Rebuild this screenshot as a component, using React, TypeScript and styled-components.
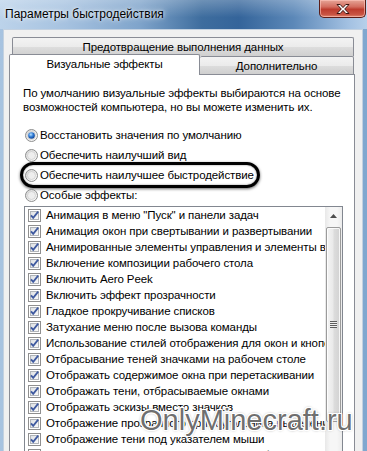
import styled, { createGlobalStyle } from "styled-components";

const GlobalStyle = createGlobalStyle`
  html, body { margin: 0; padding: 0; }
  body {
    font-family: "Liberation Sans", Arial, sans-serif;
    font-size: 11.5px;
    letter-spacing: -0.1px;
    color: #000;
  }
`;

const Window = styled.div`
  position: relative;
  width: 367px;
  height: 451px;
  overflow: hidden;
  display: flex;
  flex-direction: column;
  background: linear-gradient(90deg, #a7c3e0 0%, #94b4d6 50%, #80a7cf 100%);
`;

const TitleBar = styled.div`
  height: 29px;
  flex: none;
  display: flex;
  justify-content: space-between;
  align-items: flex-start;
  background:
    linear-gradient(180deg, rgba(255, 255, 255, 0.25) 0%, rgba(255, 255, 255, 0) 60%),
    linear-gradient(90deg, #bcd3ea 0%, #a6c2e0 18%, #7fa4cb 38%, #3e6d9e 55%, #34649a 65%, #5c88b8 80%, #a3c1e2 95%, #b7d0ea 100%);
`;

const Title = styled.div`
  padding: 7px 0 0 5px;
  line-height: 15px;
  font-size: 12px;
  letter-spacing: 0;
  color: #000;
  text-shadow: 0 0 6px rgba(255, 255, 255, 0.9), 0 0 3px rgba(255, 255, 255, 0.8);
`;

const CloseButton = styled.div`
  width: 47px;
  height: 18px;
  margin-right: 1px;
  box-sizing: border-box;
  border: 1px solid #5a1d18;
  border-top: none;
  border-radius: 0 0 5px 5px;
  box-shadow: inset 0 0 0 1px rgba(255, 200, 190, 0.6);
  background: linear-gradient(180deg, #e6a597 0%, #d36d5f 40%, #bd3c2e 55%, #c85443 85%, #e08770 100%);
  display: flex;
  align-items: center;
  justify-content: center;
`;

const Client = styled.div`
  flex: 1;
  margin: 0 4px 0 3px;
  background: #f0f0f0;
  border: 1px solid #c3d1e0;
  border-bottom: none;
  padding: 7px 7px 0 5px;
  display: flex;
  flex-direction: column;
  min-height: 0;
`;

const TabRow = styled.div`
  display: flex;
  height: 18px;
  flex: none;
  align-items: flex-start;
`;

const BackTab = styled.div`
  height: 19px;
  flex: none;
  box-sizing: border-box;
  margin: 0 1px 0 3px;
  border: 1px solid #898c95;
  border-bottom: none;
  border-radius: 2px 2px 0 0;
  background: linear-gradient(180deg, #f3f3f3 0%, #ebebeb 50%, #dddddd 51%, #cfcfcf 100%);
  padding-top: 2px;
  line-height: 15px;
  text-align: center;
`;

const Tab = styled.div<{ $active?: boolean; $width: number }>`
  position: relative;
  z-index: 1;
  box-sizing: border-box;
  width: ${(p) => p.$width}px;
  height: ${(p) => (p.$active ? 21 : 18)}px;
  margin-top: ${(p) => (p.$active ? -2 : 0)}px;
  border: 1px solid #898c95;
  border-bottom: none;
  ${(p) => (p.$active ? "" : "border-left: none;")}
  border-radius: 2px 2px 0 0;
  background: ${(p) =>
    p.$active
      ? "#ffffff"
      : "linear-gradient(180deg, #f3f3f3 0%, #ebebeb 50%, #dddddd 51%, #cfcfcf 100%)"};
  padding-top: 2px;
  line-height: 15px;
  text-align: center;
`;

const Panel = styled.div`
  flex: 1;
  background: #ffffff;
  border: 1px solid #898c95;
  border-bottom: none;
  padding: 11px 12px 0 13px;
  min-height: 0;
`;

const Description = styled.p`
  margin: 0;
  line-height: 14px;
  white-space: nowrap;
`;

const RadioGroup = styled.div`
  margin-top: 11px;
  display: flex;
  flex-direction: column;
`;

const RadioRow = styled.div<{ $circled?: boolean }>`
  position: relative;
  height: 20px;
  display: flex;
  align-items: center;
  gap: 2px;
  padding-left: 2px;

  ${(p) =>
    p.$circled &&
    `
    &::after {
      content: "";
      position: absolute;
      left: -3px;
      top: -3px;
      width: 240px;
      height: 26px;
      box-sizing: border-box;
      border: 3px solid #000;
      border-radius: 13px;
      box-shadow: 0 1px 3px rgba(0, 0, 0, 0.6), inset 0 0 2px rgba(0, 0, 0, 0.5);
    }
  `}
`;

const ListBox = styled.div`
  margin: 1px 0 0 1px;
  width: 319px;
  height: 260px;
  box-sizing: border-box;
  border: 1px solid #828790;
  display: flex;
`;

const Items = styled.div`
  flex: 1;
  overflow: hidden;
`;

const ItemRow = styled.div`
  height: 16px;
  display: flex;
  align-items: center;
  padding-left: 3px;
  gap: 5px;
  white-space: nowrap;
`;

const ScrollBar = styled.div`
  width: 17px;
  flex: none;
  background: linear-gradient(90deg, #e8e8e8 0%, #f6f6f6 30%, #f6f6f6 70%, #ececec 100%);
  display: flex;
  flex-direction: column;
  align-items: center;
`;

const ArrowButton = styled.div`
  height: 17px;
  width: 17px;
  display: flex;
  align-items: center;
  justify-content: center;
`;

const Thumb = styled.div`
  margin-top: 3px;
  width: 15px;
  height: 195px;
  box-sizing: border-box;
  border: 1px solid #9b9b9b;
  border-radius: 2px;
  background: linear-gradient(90deg, #f4f4f4 0%, #eaeaea 45%, #dcdcdc 55%, #d2d2d2 100%);
  box-shadow: inset 0 0 0 1px rgba(255, 255, 255, 0.8);
  display: flex;
  align-items: center;
  justify-content: center;
`;

const Grip = styled.div`
  width: 7px;
  height: 7px;
  background: repeating-linear-gradient(180deg, #5d5d5d 0 1px, #f0f0f0 1px 2px);
`;

const Watermark = styled.div`
  position: absolute;
  left: 140px;
  top: 403px;
  font-family: "Liberation Sans", Arial, sans-serif;
  font-size: 29px;
  letter-spacing: 0;
  line-height: 34px;
  color: rgba(85, 85, 85, 0.85);
  text-shadow:
    1px 0 0 #fff, -1px 0 0 #fff, 0 1px 0 #fff, 0 -1px 0 #fff,
    1px 1px 0 #fff, -1px -1px 0 #fff, 1px -1px 0 #fff, -1px 1px 0 #fff,
    0 0 3px rgba(0, 0, 0, 0.6);
  pointer-events: none;
`;

function CloseIcon() {
  return (
    <svg width="16" height="12" viewBox="0 0 16 12">
      <path
        d="M2 1.5h3.2L8 4.6l2.8-3.1H14L9.7 6l4.3 4.5h-3.2L8 7.4l-2.8 3.1H2L6.3 6z"
        fill="#ffffff"
        stroke="#3a1410"
        strokeWidth="1"
        strokeLinejoin="round"
      />
    </svg>
  );
}

function Radio({ checked }: { checked?: boolean }) {
  return (
    <svg width="13" height="13" viewBox="0 0 13 13" style={{ flex: "none" }}>
      <defs>
        <linearGradient id="rOuter" x1="0" y1="0" x2="1" y2="1">
          <stop offset="0" stopColor="#d4d4d4" />
          <stop offset="1" stopColor="#ffffff" />
        </linearGradient>
        <radialGradient id="rDot" cx="0.4" cy="0.35" r="0.7">
          <stop offset="0" stopColor="#b9e3ff" />
          <stop offset="0.5" stopColor="#2f7bd6" />
          <stop offset="1" stopColor="#0c3d8c" />
        </radialGradient>
      </defs>
      <circle cx="6.5" cy="6.5" r="6" fill="url(#rOuter)" stroke="#8e8f8f" />
      <circle cx="6.5" cy="6.5" r="4" fill="#eeeeee" stroke="#c4c4c4" strokeWidth="0.6" />
      {checked && <circle cx="6.5" cy="6.5" r="3.3" fill="url(#rDot)" />}
    </svg>
  );
}

function Check() {
  return (
    <svg width="13" height="13" viewBox="0 0 13 13" style={{ flex: "none" }}>
      <defs>
        <linearGradient id="cFill" x1="0" y1="0" x2="1" y2="1">
          <stop offset="0" stopColor="#dcdfe3" />
          <stop offset="1" stopColor="#fbfbfb" />
        </linearGradient>
      </defs>
      <rect x="0.5" y="0.5" width="12" height="12" fill="#fff" stroke="#8f8f8f" />
      <rect x="2.5" y="2.5" width="8" height="8" fill="url(#cFill)" stroke="#b1b5ba" />
      <path d="M3 6.3l2.2 2.6L10.2 2.6" fill="none" stroke="#3f5aa0" strokeWidth="1.8" />
    </svg>
  );
}

const effects = [
  "Анимация в меню \"Пуск\" и панели задач",
  "Анимация окон при свертывании и развертывании",
  "Анимированные элементы управления и элементы внутри окна",
  "Включение композиции рабочего стола",
  "Включить Aero Peek",
  "Включить эффект прозрачности",
  "Гладкое прокручивание списков",
  "Затухание меню после вызова команды",
  "Использование стилей отображения для окон и кнопок",
  "Отбрасывание теней значками на рабочем столе",
  "Отображать содержимое окна при перетаскивании",
  "Отображать тени, отбрасываемые окнами",
  "Отображать эскизы вместо значков",
  "Отображение прозрачного прямоугольника выделения",
  "Отображение тени под указателем мыши",
  "Сглаживание неровностей экранных шрифтов",
];

export default function App() {
  return (
    <Window>
      <GlobalStyle />
      <TitleBar>
        <Title>Параметры быстродействия</Title>
        <CloseButton>
          <CloseIcon />
        </CloseButton>
      </TitleBar>
      <Client>
        <BackTab>Предотвращение выполнения данных</BackTab>
        <TabRow>
          <Tab $active $width={191}>Визуальные эффекты</Tab>
          <Tab $width={154}>Дополнительно</Tab>
        </TabRow>
        <Panel>
          <Description>
            По умолчанию визуальные эффекты выбираются на основе
            <br />
            возможностей компьютера, но вы можете изменить их.
          </Description>
          <RadioGroup>
            <RadioRow>
              <Radio checked />
              Восстановить значения по умолчанию
            </RadioRow>
            <RadioRow>
              <Radio />
              Обеспечить наилучший вид
            </RadioRow>
            <RadioRow $circled>
              <Radio />
              Обеспечить наилучшее быстродействие
            </RadioRow>
            <RadioRow>
              <Radio />
              Особые эффекты:
            </RadioRow>
          </RadioGroup>
          <ListBox>
            <Items>
              {effects.map((e) => (
                <ItemRow key={e}>
                  <Check />
                  {e}
                </ItemRow>
              ))}
            </Items>
            <ScrollBar>
              <ArrowButton>
                <svg width="7" height="4" viewBox="0 0 7 4">
                  <path d="M0 4L3.5 0L7 4z" fill="#4d4d4d" />
                </svg>
              </ArrowButton>
              <Thumb>
                <Grip />
              </Thumb>
            </ScrollBar>
          </ListBox>
        </Panel>
      </Client>
      <Watermark>OnlyMinecraft.ru</Watermark>
    </Window>
  );
}
